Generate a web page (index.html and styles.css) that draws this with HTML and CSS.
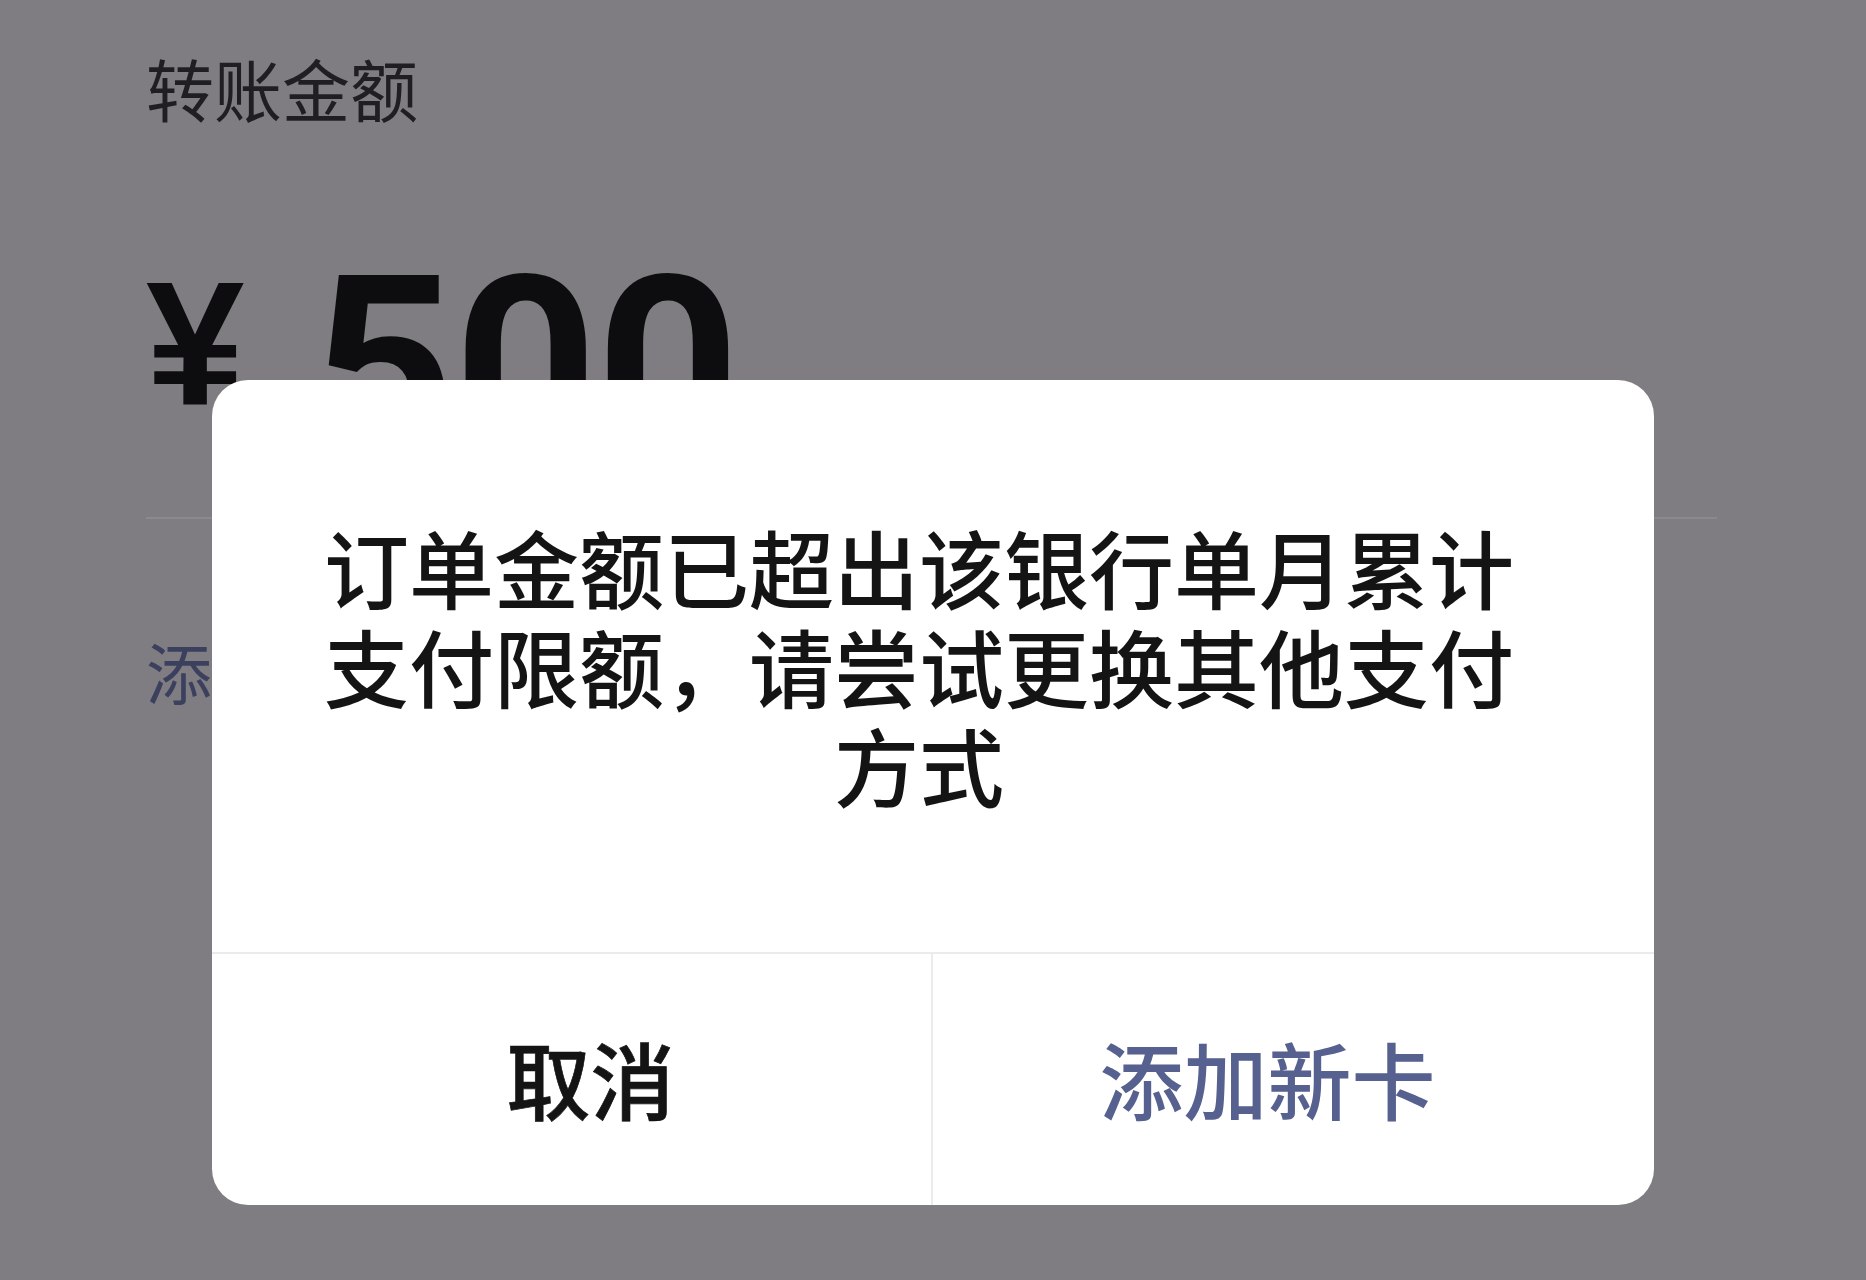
FILE: index.html
```html
<!DOCTYPE html>
<html lang="zh-CN">
<head>
<meta charset="utf-8">
<title>转账金额</title>
<link rel="stylesheet" href="styles.css">
</head>
<body>
<div class="screen">
  <main class="page">
    <div class="label">转账金额</div>
    <div class="amount">
      <span class="currency">¥</span>
      <span class="value">500</span>
    </div>
    <div class="divider"></div>
    <div class="link">添加新卡</div>
  </main>
  <div class="dialog" role="alertdialog">
    <div class="message">订单金额已超出该银行单月累计支付限额，请尝试更换其他支付方式</div>
    <div class="actions">
      <div class="btn btn-cancel">取消</div>
      <div class="btn btn-primary">添加新卡</div>
    </div>
  </div>
</div>
</body>
</html>
```
FILE: styles.css
```css
* { box-sizing: border-box; }
html, body {
  margin: 0;
  padding: 0;
}
body {
  background: #7f7d81;
  font-family: "Noto Sans CJK SC", "Noto Sans", sans-serif;
}
.screen {
  position: relative;
  width: 1866px;
  height: 1280px;
  overflow: hidden;
  background: #7f7d81;
}
.page {
  padding: 54px 150px 0 146px;
  display: flex;
  flex-direction: column;
}
.label {
  font-size: 68px;
  line-height: 68px;
  color: #1f1e22;
}
.amount {
  display: flex;
  align-items: flex-start;
  margin-top: 119px;
  color: #0d0c0e;
  font-weight: 700;
}
.currency {
  font-family: "Liberation Sans", sans-serif;
  font-size: 177px;
  line-height: 1;
  margin-top: 14px;
}
.value {
  font-family: Roboto, "Liberation Sans", sans-serif;
  font-size: 250px;
  line-height: 1;
  letter-spacing: -1px;
  margin-left: 67px;
  margin-top: 3px;
}
.divider {
  margin-top: 23px;
  height: 2px;
  width: 1571px;
  background: #8b898d;
}
.link {
  margin-top: 118px;
  font-size: 66px;
  line-height: 66px;
  color: #3b405f;
}
.dialog {
  position: absolute;
  left: 212px;
  top: 380px;
  width: 1442px;
  height: 825px;
  background: #ffffff;
  border-radius: 36px;
  display: flex;
  flex-direction: column;
  overflow: hidden;
}
.message {
  flex: 1;
  padding: 136px 116px 0 88px;
  font-size: 85px;
  line-height: 99px;
  text-align: center;
  color: #141414;
  font-weight: 500;
}
.actions {
  height: 253px;
  display: grid;
  grid-template-columns: 1fr 1fr;
  border-top: 2px solid #ebebeb;
}
.btn {
  display: flex;
  align-items: center;
  justify-content: center;
  font-size: 84px;
  line-height: 1;
  padding-bottom: 4px;
}
.btn-cancel {
  color: #141414;
  font-weight: 500;
  -webkit-text-stroke: 0.7px #141414;
  padding-left: 38px;
  border-right: 2px solid #ebebeb;
}
.btn-primary {
  color: #56618f;
  font-weight: 500;
  padding-right: 52px;
}
```
